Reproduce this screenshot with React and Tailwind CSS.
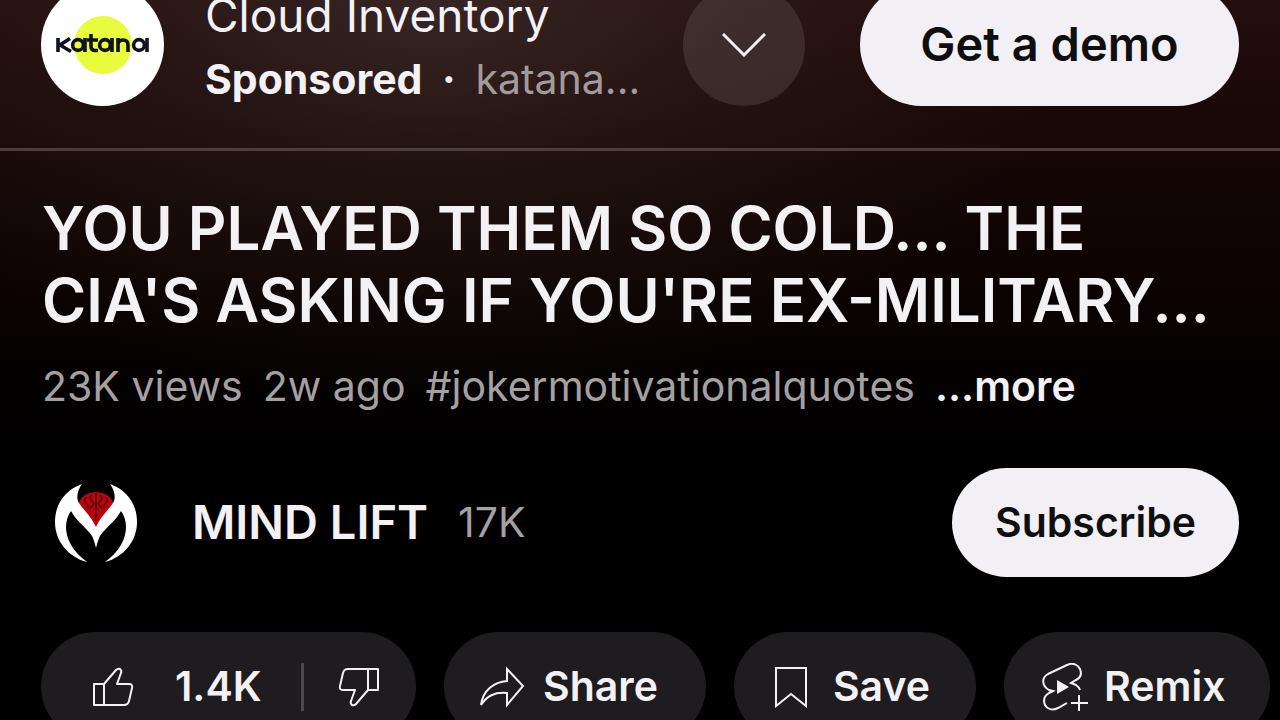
import React, { useState } from "react";

function KatanaLogo() {
  return (
    <div className="grid size-[123px] shrink-0 place-items-center rounded-full bg-white">
      <div className="col-start-1 row-start-1 size-[58px] rounded-full bg-[#e8fb3c]" />
      <svg
        viewBox="0 0 94 22"
        className="col-start-1 row-start-1 h-[22px] w-[94px]"
        fill="none"
        stroke="#10131f"
        strokeWidth="3.6"
        role="img"
        aria-label="Katana"
      >
        <path d="M2 4v14M14 4.500L4 11l11 6.500" />
        <circle cx="22" cy="11" r="5.400" />
        <path d="M29 4v14M35 0v12q0 4.500 4 4.500h3M31 6h11" />
        <circle cx="49" cy="11" r="5.400" />
        <path d="M56 4v14M62 18V4M62 11q0-5 5-5t5 5v7" />
        <circle cx="83" cy="11" r="5.400" />
        <path d="M91 4v14" />
      </svg>
    </div>
  );
}

function ChannelLogo() {
  return (
    <svg viewBox="0 0 82 78" className="h-[78px] w-[82px] shrink-0" aria-hidden="true">
      <path d="M23 19Q29 8 41 8t18 11L41 45Z" fill="#b8040e" />
      <g fill="none" stroke="#4a0408" strokeWidth="1.500">
        <path d="M41 9v28M37 11q-4 3 0 6t-2 7M45 11q4 3 0 6t2 7M32 13q-4 3-1 6t2 6M50 13q4 3 1 6t-2 6" />
      </g>
      <path
        d="M27 0C10 6 0 20 0 38c0 19 13 35 32 40C18 68 11 55 11 43c0-6 2-12 5-16 5 10 16 17 21 25 2 4 3 8 4 12 1-4 2-8 4-12 5-8 16-15 21-25 3 4 5 10 5 16 0 12-7 25-21 35 19-5 32-21 32-40C82 20 72 6 55 0c5 7 6 14 3 19-2 4-12 13-17 24C36 32 26 23 24 19 21 14 22 7 27 0Z"
        fill="#fff"
      />
    </svg>
  );
}

function ThumbIcon({ className = "" }) {
  return (
    <svg
      viewBox="0 0 42 42"
      className={`size-[42px] shrink-0 ${className}`}
      fill="none"
      stroke="currentColor"
      strokeWidth="2"
      strokeLinejoin="round"
      aria-hidden="true"
    >
      <path d="M2 18h10v21H2ZM12 18L24 4q2-2 4-1 2 2 1 4l-4 11h12q4 0 3 4l-3 13q-1 4-5 4H12" />
    </svg>
  );
}

function ShareIcon() {
  return (
    <svg viewBox="0 0 46 42" className="h-[42px] w-[46px] shrink-0" fill="none" stroke="currentColor" strokeWidth="2" aria-hidden="true">
      <path d="M28 3v12C15 16 4 24 2 39c6-9 13-13 26-12v12l16-19Z" />
    </svg>
  );
}

function SaveIcon() {
  return (
    <svg viewBox="0 0 34 42" className="h-[42px] w-[34px] shrink-0" fill="none" stroke="currentColor" strokeWidth="2" aria-hidden="true">
      <path d="M2 2h30v38L17 28 2 40Z" />
    </svg>
  );
}

function RemixIcon() {
  return (
    <svg viewBox="0 0 46 48" className="h-[48px] w-[46px] shrink-0" fill="none" stroke="currentColor" strokeWidth="2" aria-hidden="true">
      <path d="M25 40l-9 5c-6 3-11 1-13-3-2-5-1-9 4-12l4-2-4-1C0 23-1 15 6 11L25 2c6-3 11 0 13 4 2 5 0 9-4 11l-5 3 5 2q3 2 4 5" />
      <path d="M15 17v14l12-7Z" fill="currentColor" stroke="none" />
      <path d="M37 32v16M29 40h17" />
    </svg>
  );
}

const actions = [
  { label: "Share", icon: ShareIcon, box: "gap-[18px] pl-[35px] pr-[48px]" },
  { label: "Save", icon: SaveIcon, box: "gap-[25px] pl-[40px] pr-[46px]" },
  { label: "Remix", icon: RemixIcon, box: "gap-[16px] pl-[38px] pr-[45px]" },
];

export default function App() {
  const [liked, setLiked] = useState(false);

  return (
    <div className="h-screen w-full overflow-hidden bg-black bg-[radial-gradient(ellipse_50%_400px_at_34%_0%,rgba(74,62,56,0.5),rgba(62,52,48,0.25)_45%,transparent),linear-gradient(#240d0d,#160606_160px,#080202_320px,#000_470px)] font-['Inter','Liberation_Sans',sans-serif] text-[#f4f1f5]">
      {/* Sponsored row */}
      <section className="border-b-[3px] border-[#4b3d3d] pb-[59px]">
        <div className="flex h-[89px] items-center px-[41px]">
          <KatanaLogo />
          <div className="ml-[41px] min-w-0 flex-1 pt-[5px] whitespace-nowrap">
            <p className="text-[46px] leading-[64px]">Cloud Inventory</p>
            <p className="flex text-[41px] leading-[64px]">
              <span className="font-bold">Sponsored</span>
              <span className="w-[53px] text-center font-bold">·</span>
              <span className="text-[#a39b9b]">katana...</span>
            </p>
          </div>
          <button
            type="button"
            aria-label="Show ad details"
            className="grid size-[122px] shrink-0 place-items-center rounded-full bg-white/10"
          >
            <svg viewBox="0 0 44 24" className="h-6 w-11" fill="none" stroke="currentColor" strokeWidth="3" aria-hidden="true">
              <path d="M1 1l21 21L43 1" />
            </svg>
          </button>
          <button
            type="button"
            className="ml-[55px] h-[123px] w-[379px] shrink-0 rounded-full bg-[#f2f0f4] text-[47px] font-semibold text-[#0f0f0f]"
          >
            Get a demo
          </button>
        </div>
      </section>

      {/* Title + meta */}
      <section className="px-[42px] pt-[41px] whitespace-nowrap">
        <h1 className="text-[60px] leading-[72px] font-semibold">
          YOU PLAYED THEM SO COLD... THE
          <br />
          CIA'S ASKING IF YOU'RE EX-MILITARY...
        </h1>
        <p className="mt-[26px] flex gap-5 text-[41px] leading-[48px] text-[#a5a1a3]">
          <span>23K views</span>
          <span>2w ago</span>
          <a href="#jokermotivationalquotes">#jokermotivationalquotes</a>
          <button type="button" className="font-semibold text-[#f4f1f5]">
            ...more
          </button>
        </p>
      </section>

      {/* Channel */}
      <section className="mt-[58px] flex h-[109px] items-center pr-[41px] pl-[55px] whitespace-nowrap">
        <ChannelLogo />
        <h2 className="ml-[55px] text-[47px] font-semibold">MIND LIFT</h2>
        <span className="ml-[30px] text-[41px] text-[#a5a1a3]">17K</span>
        <button
          type="button"
          className="ml-auto h-full w-[287px] rounded-full bg-[#f2f0f4] text-[41px] font-semibold text-[#0f0f0f]"
        >
          Subscribe
        </button>
      </section>

      {/* Actions */}
      <section className="mt-[55px] flex gap-7 pl-[41px] text-[41px] font-semibold whitespace-nowrap">
        <div className="flex h-[109px] w-[375px] shrink-0 items-center rounded-full bg-[#1e1c1f]">
          <button
            type="button"
            aria-pressed={liked}
            onClick={() => setLiked(!liked)}
            className="flex h-full flex-1 items-center gap-[41px] pl-[51px]"
          >
            <ThumbIcon />
            1.4K
          </button>
          <span className="h-12 w-[3px] bg-[#4a484b]" />
          <button type="button" aria-label="Dislike" className="flex h-full items-center pr-[36px] pl-[34px]">
            <ThumbIcon className="rotate-180" />
          </button>
        </div>
        {actions.map(({ label, icon: Icon, box }) => (
          <button key={label} type="button" className={`flex h-[109px] shrink-0 items-center rounded-full bg-[#1e1c1f] ${box}`}>
            <Icon />
            {label}
          </button>
        ))}
      </section>
    </div>
  );
}
